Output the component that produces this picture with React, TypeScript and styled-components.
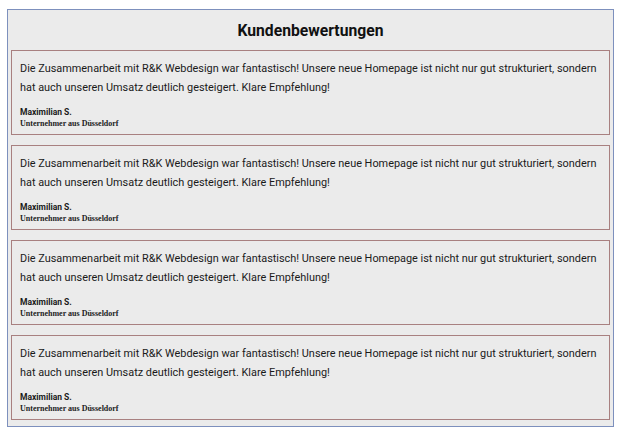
import styled, { createGlobalStyle } from "styled-components";

const GlobalStyle = createGlobalStyle`
  body {
    margin: 0;
    background: #ffffff;
    font-family: Roboto, "Liberation Sans", sans-serif;
  }
`;

const reviews = [
  {
    id: 1,
    text: "Die Zusammenarbeit mit R&K Webdesign war fantastisch! Unsere neue Homepage ist nicht nur gut strukturiert, sondern hat auch unseren Umsatz deutlich gesteigert. Klare Empfehlung!",
    name: "Maximilian S.",
    role: "Unternehmer aus Düsseldorf",
  },
  {
    id: 2,
    text: "Die Zusammenarbeit mit R&K Webdesign war fantastisch! Unsere neue Homepage ist nicht nur gut strukturiert, sondern hat auch unseren Umsatz deutlich gesteigert. Klare Empfehlung!",
    name: "Maximilian S.",
    role: "Unternehmer aus Düsseldorf",
  },
  {
    id: 3,
    text: "Die Zusammenarbeit mit R&K Webdesign war fantastisch! Unsere neue Homepage ist nicht nur gut strukturiert, sondern hat auch unseren Umsatz deutlich gesteigert. Klare Empfehlung!",
    name: "Maximilian S.",
    role: "Unternehmer aus Düsseldorf",
  },
  {
    id: 4,
    text: "Die Zusammenarbeit mit R&K Webdesign war fantastisch! Unsere neue Homepage ist nicht nur gut strukturiert, sondern hat auch unseren Umsatz deutlich gesteigert. Klare Empfehlung!",
    name: "Maximilian S.",
    role: "Unternehmer aus Düsseldorf",
  },
];

export default function App() {
  return (
    <>
      <GlobalStyle />
      <Page>
        <Section>
          <Title>Kundenbewertungen</Title>
          <List>
            {reviews.map((r) => (
              <Card key={r.id}>
                <Quote>{r.text}</Quote>
                <Author>
                  <Name>{r.name}</Name>
                  <Role>{r.role}</Role>
                </Author>
              </Card>
            ))}
          </List>
        </Section>
      </Page>
    </>
  );
}

const Page = styled.div`
  padding: 9px 4px 4px 7px;
`;

const Section = styled.section`
  width: 599px;
  height: 416px;
  border: 1px solid #7d90bd;
  background: #ebebeb;
  padding: 0 3px;
  box-sizing: content-box;
  display: flex;
  flex-direction: column;
`;

const Title = styled.h2`
  margin: 0;
  height: 40px;
  display: flex;
  align-items: center;
  justify-content: center;
  font-size: 15.7px;
  font-weight: 700;
  color: #111;
`;

const List = styled.div`
  display: flex;
  flex-direction: column;
  gap: 10px;
`;

const Card = styled.div`
  border: 1px solid #a88080;
  padding: 8px;
  height: 85px;
  box-sizing: border-box;
`;

const Quote = styled.p`
  margin: 0;
  font-size: 10.9px;
  line-height: 19px;
  color: #1a1a1a;
`;

const Author = styled.div`
  margin-top: 10px;
  display: flex;
  flex-direction: column;
`;

const Name = styled.strong`
  font-size: 8.5px;
  line-height: 11px;
  font-weight: 700;
  color: #1a1a1a;
`;

const Role = styled.span`
  font-family: "Liberation Serif", serif;
  font-size: 8px;
  line-height: 11px;
  font-weight: 700;
  color: #222;
`;
